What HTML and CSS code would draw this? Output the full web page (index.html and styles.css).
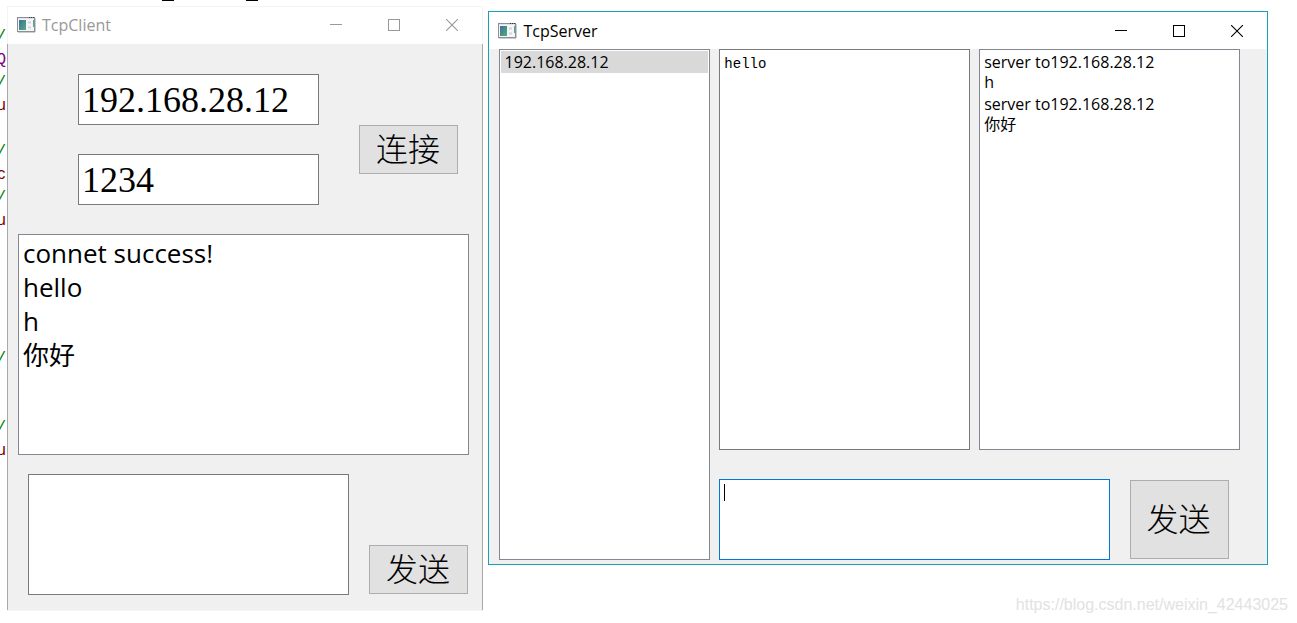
FILE: index.html
```html
<!DOCTYPE html>
<html lang="zh-CN">
<head>
<meta charset="utf-8">
<title>TcpClient / TcpServer</title>
<link rel="stylesheet" href="styles.css">
</head>
<body>
<svg class="defs" aria-hidden="true">
  <defs>
    <linearGradient id="pane" x1="0" y1="0" x2="1" y2="1">
      <stop offset="0" stop-color="#3f6f9c"/>
      <stop offset="1" stop-color="#4fae7c"/>
    </linearGradient>
  </defs>
  <symbol id="app" viewBox="0 0 19 16">
    <rect x="0.5" y="0.5" width="17" height="14" fill="#f4f5f7" stroke="#8b8f96"/>
    <path d="M1 15.5H18M18.5 1V15" stroke="#c9ccd2" fill="none"/>
    <path d="M1 1.5H17" stroke="#dfe3ea"/>
    <path d="M12 .5h1M14 .5h1M16 .5h1" stroke="#24364f"/>
    <rect x="2" y="3" width="7" height="10" fill="url(#pane)"/>
    <path d="M11 5.500h3M11 10.500h3" stroke="#d3d5d9" stroke-width="2"/>
    <path d="M16.500 3v7" stroke="#5aa98a"/>
  </symbol>
  <symbol id="min" viewBox="0 0 12 12"><path d="M0 5.500H12" stroke="currentColor"/></symbol>
  <symbol id="max" viewBox="0 0 12 12"><rect x=".5" y=".5" width="11" height="11" fill="none" stroke="currentColor"/></symbol>
  <symbol id="close" viewBox="0 0 12 12"><path d="M0 0L12 12M12 0L0 12" stroke="currentColor" stroke-width="1.100"/></symbol>
</svg>

<main class="desktop">
  <div class="code-top" aria-hidden="true"><i></i><i></i></div>
  <div class="gutter" aria-hidden="true">
    <span class="comment">/</span>
    <span class="type">Q</span>
    <span class="comment">/</span>
    <span class="name">u</span>
    <span></span>
    <span class="comment">/</span>
    <span class="name">c</span>
    <span class="comment">/</span>
    <span class="name">u</span>
    <span></span><span></span><span></span><span></span><span></span>
    <span class="comment">/</span>
    <span></span><span></span>
    <span class="comment">/</span>
    <span class="name">u</span>
  </div>

  <section class="window client">
    <header class="titlebar">
      <svg class="app-icon" aria-hidden="true"><use href="#app"/></svg>
      <h1 class="title">TcpClient</h1>
      <div class="controls">
        <button type="button" aria-label="Minimize"><svg><use href="#min"/></svg></button>
        <button type="button" aria-label="Maximize"><svg><use href="#max"/></svg></button>
        <button type="button" aria-label="Close"><svg><use href="#close"/></svg></button>
      </div>
    </header>
    <div class="client-body">
      <form class="connect">
        <div class="fields">
          <input class="field" type="text" aria-label="IP" value="192.168.28.12">
          <input class="field" type="text" aria-label="Port" value="1234">
        </div>
        <button class="push" type="button">连接</button>
      </form>
      <ul class="box client-log">
        <li>connet success!</li>
        <li>hello</li>
        <li>h</li>
        <li>你好</li>
      </ul>
      <form class="compose">
        <textarea class="box message" aria-label="Message"></textarea>
        <button class="push" type="button">发送</button>
      </form>
    </div>
  </section>

  <section class="window server">
    <header class="titlebar">
      <svg class="app-icon" aria-hidden="true"><use href="#app"/></svg>
      <h1 class="title">TcpServer</h1>
      <div class="controls">
        <button type="button" aria-label="Minimize"><svg><use href="#min"/></svg></button>
        <button type="button" aria-label="Maximize"><svg><use href="#max"/></svg></button>
        <button type="button" aria-label="Close"><svg><use href="#close"/></svg></button>
      </div>
    </header>
    <div class="server-body">
      <ul class="box peers">
        <li class="selected">192.168.28.12</li>
      </ul>
      <div class="traffic">
        <div class="logs">
          <textarea class="box received" aria-label="Received" readonly>hello</textarea>
          <ul class="box sent">
            <li>server to192.168.28.12<br>h</li>
            <li>server to192.168.28.12<br>你好</li>
          </ul>
        </div>
        <form class="reply">
          <div class="editor">
            <textarea class="box active" aria-label="Message"></textarea>
            <span class="caret"></span>
          </div>
          <button class="push tall" type="button">发送</button>
        </form>
      </div>
    </div>
  </section>

  <footer class="watermark">https://blog.csdn.net/weixin_42443025</footer>
</main>
</body>
</html>
```
FILE: styles.css
```css
* {
  box-sizing: border-box;
}

body {
  margin: 0;
  background: #fff;
  color: #000;
  font-family: "Open Sans", "Noto Sans CJK SC", sans-serif;
  font-size: 16px;
}

ul,
h1 {
  margin: 0;
  padding: 0;
  list-style: none;
}

.defs {
  position: absolute;
  width: 0;
  height: 0;
}

.desktop {
  position: relative;
  display: flex;
  align-items: flex-start;
  gap: 5px;
  min-height: 100vh;
  padding: 6px 29px 0 7px;
  overflow: hidden;
}

/* Editor lines that show from behind the windows */
.code-top {
  position: absolute;
  top: 0;
  left: 162px;
  display: flex;
  gap: 72px;
}

.code-top i {
  width: 12px;
  height: 1px;
  background: #000;
}

.gutter {
  position: absolute;
  top: 26px;
  left: 0;
  width: 6px;
  display: flex;
  flex-direction: column;
  align-items: flex-end;
  overflow: hidden;
  font: 16px/23px "Liberation Mono", monospace;
}

.gutter span {
  height: 23px;
}

.comment {
  color: #008000;
}

.type {
  color: #800080;
}

.name {
  color: #800000;
}

.window {
  min-width: 0;
  background: #f0f0f0;
}

.client {
  flex: 476 1 0;
  border: 1px solid #f4f4f4;
}

.server {
  flex: 780 1 0;
  margin-top: 5px;
  border: 1px solid #18a0b8;
}

.titlebar {
  display: flex;
  align-items: center;
  height: 37px;
  padding-left: 9px;
  background: #fff;
}

.app-icon {
  width: 19px;
  height: 16px;
}

.title {
  flex: 1;
  margin-left: 6px;
  font-size: 16px;
  font-weight: 400;
  line-height: 20px;
}

.controls {
  display: flex;
  padding-right: 1px;
}

.controls button {
  width: 58px;
  height: 36px;
  padding: 0;
  border: 0;
  background: none;
  color: inherit;
}

.controls svg {
  display: block;
  width: 12px;
  height: 12px;
  margin: 0 auto;
}

.client .titlebar {
  padding-bottom: 1px;
  color: #999;
}

.client-body {
  margin: 0 -1px;
  padding: 30px 13px 16px 10px;
  border: solid #a9a9a9;
  border-width: 0 1px;
}

.box,
.field {
  border: 1px solid #828790;
  border-radius: 0;
  background: #fff;
  color: #000;
  outline: none;
  resize: none;
}

.connect {
  display: flex;
  align-items: flex-end;
  gap: 40px;
  padding: 0 11px 0 60px;
}

.connect .push {
  margin-bottom: 31px;
}

.fields {
  flex: 1;
  min-width: 0;
  display: flex;
  flex-direction: column;
  gap: 29px;
}

.field {
  width: 100%;
  height: 51px;
  padding: 0 3px;
  border-color: #7a7a7a;
  font: 36px "Liberation Serif", serif;
}

.push {
  flex: none;
  width: 99px;
  height: 49px;
  padding: 0 2px 6px 0;
  border: 1px solid #adadad;
  background: #e1e1e1;
  color: #000;
  font: 300 32px/40px "Noto Sans CJK SC", sans-serif;
}

.push.tall {
  height: 79px;
}

.client-log {
  min-height: 221px;
  margin-top: 29px;
  padding: 1px 4px;
  font-size: 26px;
  line-height: 34px;
}

.compose {
  display: flex;
  align-items: flex-end;
  gap: 20px;
  margin-top: 19px;
  padding: 0 1px 0 10px;
}

.message {
  flex: 1;
  min-width: 0;
  height: 121px;
  margin-bottom: -1px;
  border-color: #7a7a7a;
}

.server-body {
  display: grid;
  grid-template-columns: 211fr 521fr;
  gap: 9px;
  padding: 0 27px 4px 10px;
}

.peers {
  padding: 1px;
}

.selected {
  padding-left: 3px;
  background: #d9d9d9;
  line-height: 22px;
}

.traffic {
  min-width: 0;
}

.logs {
  display: grid;
  grid-template-columns: 251fr 261fr;
  gap: 9px;
  min-height: 401px;
}

.received {
  min-width: 0;
  padding: 5px 4px;
  border-color: #7a7a7a;
  font: 14px/18px "Liberation Mono", monospace;
}

.sent {
  padding: 2px 4px;
  line-height: 20px;
}

.sent li {
  padding-bottom: 2px;
}

.reply {
  display: flex;
  align-items: center;
  gap: 20px;
  margin-top: 29px;
  padding-right: 11px;
}

.editor {
  position: relative;
  flex: 1;
  display: flex;
}

.active {
  width: 100%;
  height: 81px;
  border-color: #0078d7;
}

.caret {
  position: absolute;
  top: 5px;
  left: 5px;
  width: 1px;
  height: 17px;
  background: #000;
}

.watermark {
  position: absolute;
  right: 9px;
  bottom: 8px;
  color: #e2e2e2;
  font: 16px/20px "Liberation Sans", sans-serif;
}
```
